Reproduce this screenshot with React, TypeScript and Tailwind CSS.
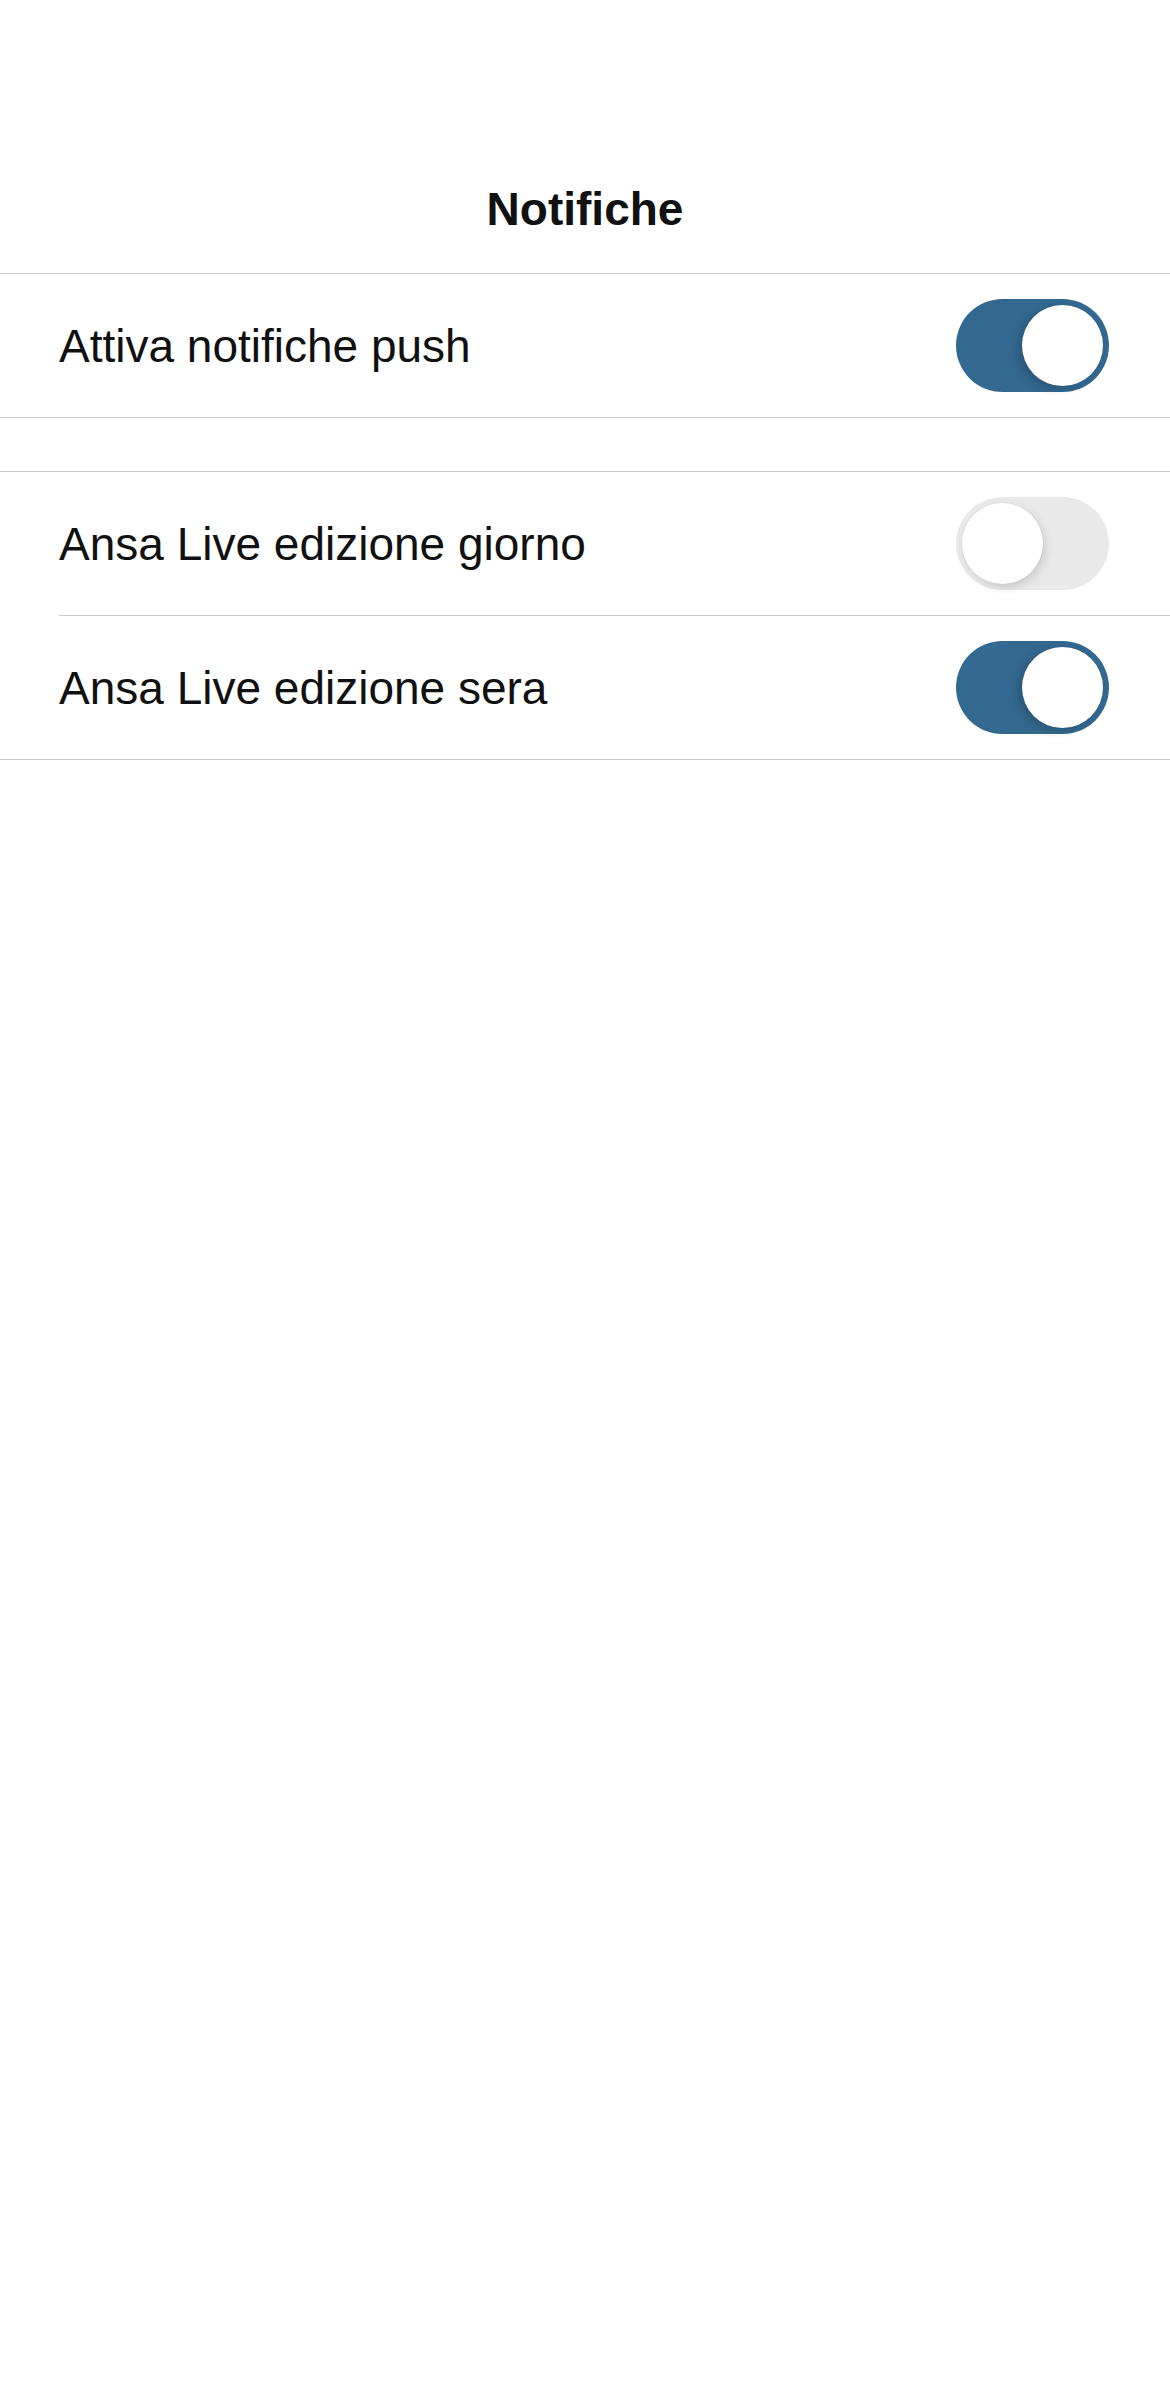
import React from "react";

function Toggle({ on }: { on: boolean }) {
  return (
    <div
      className={
        "flex h-[93px] w-[153px] shrink-0 items-center rounded-full p-[6px] " +
        (on ? "justify-end bg-[#336890]" : "justify-start bg-[#e9e9e9]")
      }
    >
      <div
        className={
          "h-[81px] w-[81px] rounded-full bg-white " +
          (on
            ? "shadow-[-4px_3px_8px_rgba(0,0,0,0.18)]"
            : "shadow-[3px_4px_8px_rgba(0,0,0,0.12),0_0_0_1px_rgba(0,0,0,0.03)]")
        }
      />
    </div>
  );
}

function Row({ label, on }: { label: string; on: boolean }) {
  return (
    <div className="flex h-[143px] items-center justify-between pl-[59px] pr-[61px]">
      <span className="text-[46px] leading-[46px] text-[#111111]">{label}</span>
      <Toggle on={on} />
    </div>
  );
}

export default function App() {
  return (
    <div
      className="min-h-[2391px] w-full bg-white"
      style={{ fontFamily: '"Liberation Sans", Arial, sans-serif' }}
    >
      <div className="flex h-[273px] justify-center pt-[186px]">
        <h1 className="text-[46px] font-bold leading-[46px] text-[#111111]">Notifiche</h1>
      </div>
      <div className="border-y border-[#cbcbcb]">
        <Row label="Attiva notifiche push" on={true} />
      </div>
      <div className="h-[53px]" />
      <div className="border-y border-[#cbcbcb]">
        <Row label="Ansa Live edizione giorno" on={false} />
        <div className="ml-[59px] h-px bg-[#cbcbcb]" />
        <Row label="Ansa Live edizione sera" on={true} />
      </div>
    </div>
  );
}
